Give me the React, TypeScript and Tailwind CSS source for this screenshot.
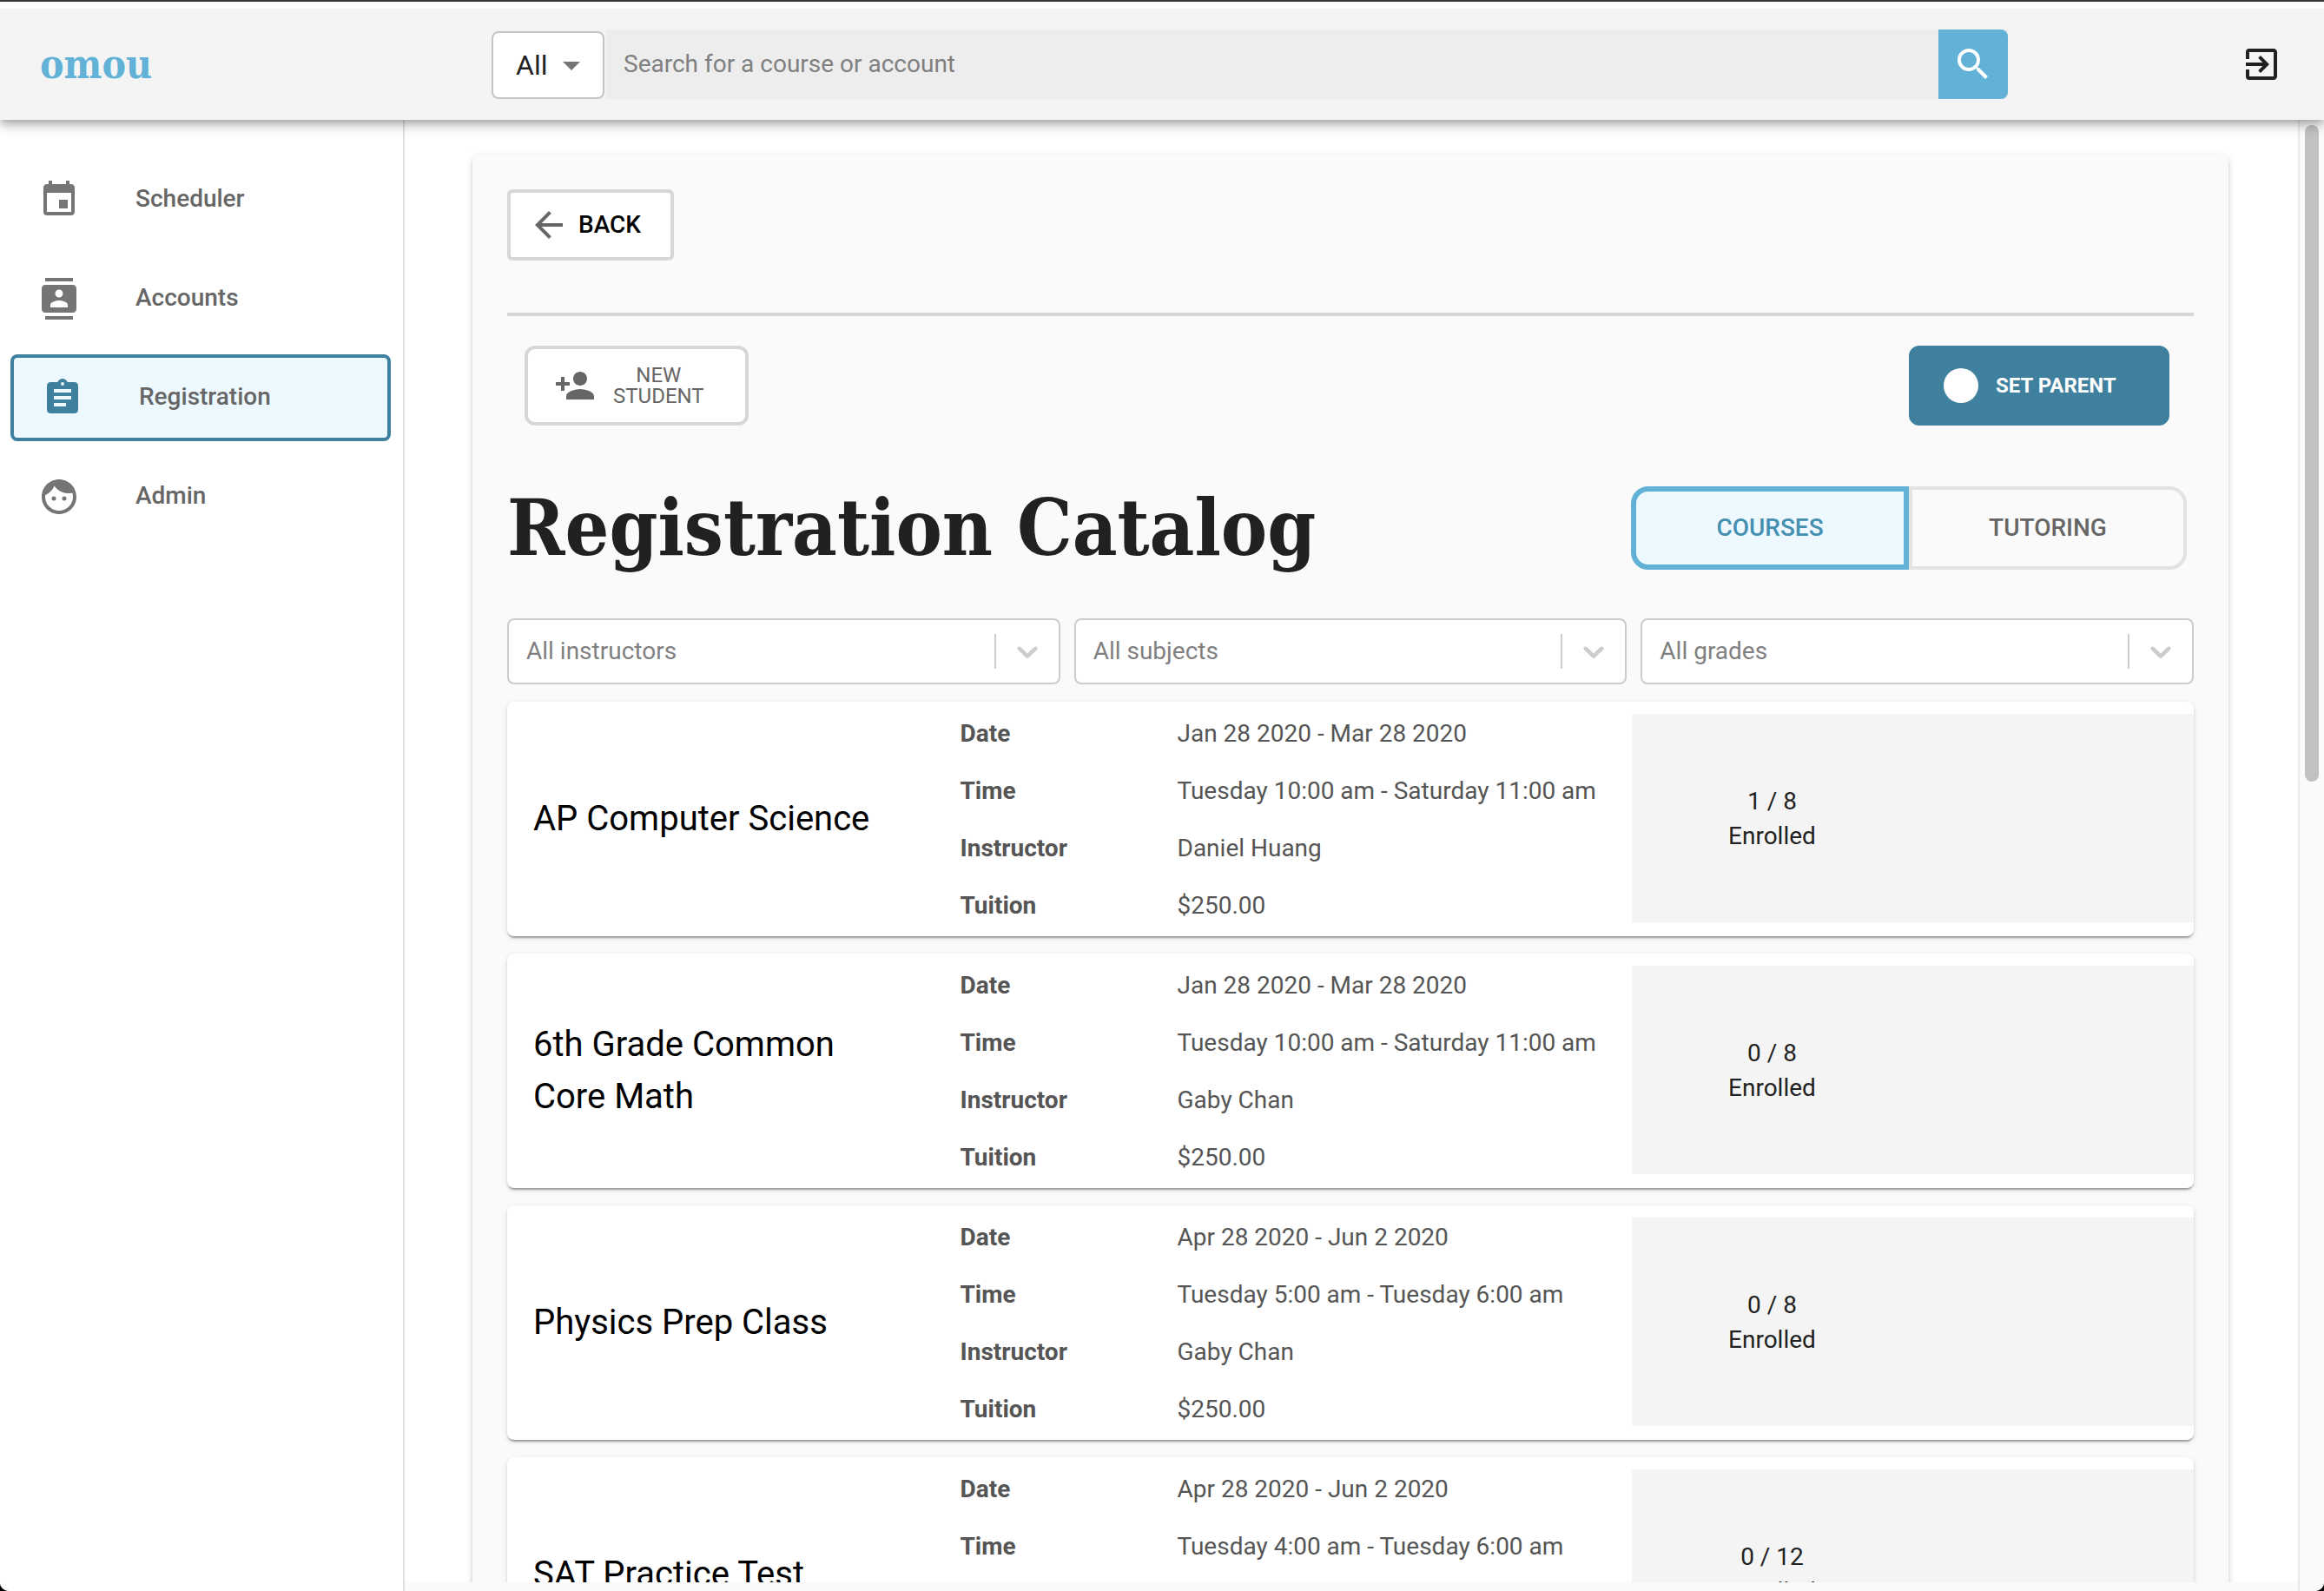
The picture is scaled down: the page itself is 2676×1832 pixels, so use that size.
import type { ReactNode } from "react";
import type { IconType } from "react-icons";
import {
  MdArrowBack,
  MdArrowDropDown,
  MdAssignment,
  MdContacts,
  MdEvent,
  MdExitToApp,
  MdFace,
  MdPersonAdd,
  MdSearch,
} from "react-icons/md";

type NavEntry = { label: string; icon: IconType; active?: boolean };

const navEntries: NavEntry[] = [
  { label: "Scheduler", icon: MdEvent },
  { label: "Accounts", icon: MdContacts },
  { label: "Registration", icon: MdAssignment, active: true },
  { label: "Admin", icon: MdFace },
];

type Course = {
  title: string;
  date: string;
  time: string;
  instructor: string;
  tuition: string;
  enrolled: string;
};

const courses: Course[] = [
  {
    title: "AP Computer Science",
    date: "Jan 28 2020 - Mar 28 2020",
    time: "Tuesday 10:00 am - Saturday 11:00 am",
    instructor: "Daniel Huang",
    tuition: "$250.00",
    enrolled: "1 / 8",
  },
  {
    title: "6th Grade Common Core Math",
    date: "Jan 28 2020 - Mar 28 2020",
    time: "Tuesday 10:00 am - Saturday 11:00 am",
    instructor: "Gaby Chan",
    tuition: "$250.00",
    enrolled: "0 / 8",
  },
  {
    title: "Physics Prep Class",
    date: "Apr 28 2020 - Jun 2 2020",
    time: "Tuesday 5:00 am - Tuesday 6:00 am",
    instructor: "Gaby Chan",
    tuition: "$250.00",
    enrolled: "0 / 8",
  },
  {
    title: "SAT Practice Test",
    date: "Apr 28 2020 - Jun 2 2020",
    time: "Tuesday 4:00 am - Tuesday 6:00 am",
    instructor: "Daniel Huang",
    tuition: "$250.00",
    enrolled: "0 / 12",
  },
];

function Header() {
  return (
    <header className="relative z-10 flex h-[138px] shrink-0 flex-col bg-[#f4f4f4] shadow-[0_4px_8px_-2px_rgba(0,0,0,0.2),0_8px_10px_0_rgba(0,0,0,0.14),0_2px_20px_0_rgba(0,0,0,0.12)]">
      <div className="h-[2px] bg-[#38383a]" />
      <div className="h-2 bg-[#fcfcfc]" />
      <div className="flex flex-1 items-center pr-12 pl-[46px]">
        <a
          href="#home"
          className="w-[520px] font-['Roboto_Slab','DejaVu_Serif_Condensed','DejaVu_Serif',serif] text-[46px] font-bold text-[#62b1d6]"
        >
          omou
        </a>
        <form className="flex h-20 flex-1 items-stretch bg-[#ededed]" role="search">
          <div className="flex bg-[#f4f4f4] pt-[2px] pr-[2px]">
            <label className="flex w-[130px] items-center rounded-lg border-2 border-[#c4c4c4] bg-white pl-[26px]">
              <select
                aria-label="Search scope"
                className="w-10 appearance-none bg-transparent text-[32px] text-[#212121]"
              >
                <option>All</option>
              </select>
              <MdArrowDropDown aria-hidden className="size-12 shrink-0 text-[#757575]" />
            </label>
          </div>
          <input
            type="text"
            aria-label="Search"
            placeholder="Search for a course or account"
            className="min-w-0 flex-1 bg-transparent px-5 text-[28px] text-[#212121] placeholder:text-[#808080]"
          />
          <button
            type="button"
            aria-label="Search"
            className="flex w-20 items-center justify-center rounded-r-lg bg-[#62b1d6] text-white"
          >
            <MdSearch className="size-12" />
          </button>
        </form>
        <div className="flex w-[316px] justify-end">
          <button type="button" aria-label="Log out" className="text-[#212121]">
            <MdExitToApp className="size-12" />
          </button>
        </div>
      </div>
    </header>
  );
}

function Sidebar() {
  return (
    <nav className="flex w-[466px] shrink-0 flex-col gap-[14px] border-r-2 border-[#e0e0e0] bg-white pt-[42px] pr-[14px] pl-3">
      {navEntries.map(({ label, icon: Icon, active }) => (
        <a
          key={label}
          href={`#${label.toLowerCase()}`}
          className={
            active
              ? "flex h-[100px] items-center gap-16 rounded-lg border-4 border-[#3e809d] bg-[#edf9ff] px-8"
              : "flex h-[100px] items-center gap-16 px-8"
          }
        >
          <Icon aria-hidden className={active ? "size-12 text-[#3e809d]" : "size-12 text-[#757575]"} />
          <span className="pb-[2px] text-[28px] font-medium text-[#666666]">{label}</span>
        </a>
      ))}
    </nav>
  );
}

function FilterSelect({ label }: { label: string }) {
  return (
    <label className="flex h-[76px] items-center rounded-lg border-2 border-[#cccccc] bg-white">
      <select
        aria-label={label}
        className="min-w-0 flex-1 appearance-none bg-transparent px-5 text-[28px] text-[#808080]"
      >
        <option>{label}</option>
      </select>
      <span className="h-10 w-[2px] bg-[#cccccc]" />
      <span className="px-4">
        <svg aria-hidden viewBox="0 0 20 20" className="size-10 fill-[#cccccc]">
          <path d="M4.516 7.548c0.436-0.446 1.043-0.481 1.576 0l3.908 3.747 3.908-3.747c0.533-0.481 1.141-0.446 1.574 0 0.436 0.445 0.408 1.197 0 1.615-0.406 0.418-4.695 4.502-4.695 4.502-0.217 0.223-0.502 0.335-0.787 0.335s-0.57-0.112-0.789-0.335c0 0-4.287-4.084-4.695-4.502s-0.436-1.17 0-1.615z" />
        </svg>
      </span>
    </label>
  );
}

function Detail({ name, children }: { name: string; children: ReactNode }) {
  return (
    <div className="flex h-[66px] items-center">
      <dt className="w-[250px] shrink-0 font-bold">{name}</dt>
      <dd className="whitespace-nowrap">{children}</dd>
    </div>
  );
}

function CourseCard({ course }: { course: Course }) {
  return (
    <article className="grid shrink-0 grid-cols-12 rounded-lg bg-white shadow-[0_4px_2px_-2px_rgba(0,0,0,0.2),0_2px_2px_0_rgba(0,0,0,0.14),0_2px_6px_0_rgba(0,0,0,0.12)]">
      <h2 className="col-span-3 flex items-center pr-10 pl-[30px] text-[40px] leading-[60px] text-black">
        {course.title}
      </h2>
      <dl className="col-span-5 pt-1 pb-[2px] pl-9 text-[28px] text-[#555555]">
        <Detail name="Date">{course.date}</Detail>
        <Detail name="Time">{course.time}</Detail>
        <Detail name="Instructor">{course.instructor}</Detail>
        <Detail name="Tuition">{course.tuition}</Detail>
      </dl>
      <div className="col-span-4 mt-[14px] mb-4 grid grid-cols-2 items-center bg-[#f4f4f4]">
        <p className="pt-[2px] text-center text-[28px] leading-10 text-[#212121]">
          {course.enrolled}
          <br />
          Enrolled
        </p>
      </div>
    </article>
  );
}

function Catalog() {
  return (
    <section className="mr-20 ml-[78px] flex flex-col rounded-lg bg-[#fafafa] p-10 shadow-[0_6px_2px_-4px_rgba(0,0,0,0.2),0_4px_4px_0_rgba(0,0,0,0.14),0_2px_10px_0_rgba(0,0,0,0.12)]">
      <div className="border-b-4 border-[#dad6d6] pb-[60px]">
        <button
          type="button"
          className="flex h-[82px] w-48 items-center gap-2.5 rounded-md border-4 border-[#dad6d6] bg-white pl-5 text-[28px] font-medium text-black"
        >
          <MdArrowBack aria-hidden className="size-12 text-[#666666]" />
          BACK
        </button>
      </div>

      <div className="mt-[34px] mr-7 ml-5 flex items-center justify-between">
        <button
          type="button"
          className="flex h-[92px] w-[258px] items-center gap-5 rounded-xl border-4 border-[#dad6d6] bg-white pl-[30px] text-2xl leading-6 text-[#666666]"
        >
          <MdPersonAdd aria-hidden className="size-12" />
          <span>
            NEW
            <br />
            STUDENT
          </span>
        </button>
        <button
          type="button"
          className="flex h-[92px] w-[300px] items-center gap-5 rounded-xl bg-[#3e809d] pl-10 text-2xl font-bold text-white"
        >
          <span className="size-10 rounded-full bg-white" />
          SET PARENT
        </button>
      </div>

      <div className="mt-[60px] mr-2 flex items-center justify-between">
        <h1 className="font-['Roboto_Slab','DejaVu_Serif_Condensed','DejaVu_Serif',serif] text-[89px] leading-[116px] font-bold whitespace-nowrap text-[#212121]">
          Registration Catalog
        </h1>
        <div className="flex text-[28px] font-medium">
          <button
            type="button"
            aria-pressed="true"
            className="h-24 w-80 rounded-l-[20px] border-6 border-[#62b1d6] bg-[#edf9ff] text-[#4590b0]"
          >
            COURSES
          </button>
          <button
            type="button"
            aria-pressed="false"
            className="h-24 w-80 rounded-r-[20px] border-4 border-[#e2e2e2] text-[#666666]"
          >
            TUTORING
          </button>
        </div>
      </div>

      <div className="mt-[46px] grid grid-cols-3 gap-4">
        <FilterSelect label="All instructors" />
        <FilterSelect label="All subjects" />
        <FilterSelect label="All grades" />
      </div>

      <div className="mt-5 flex flex-col gap-5">
        {courses.map((course) => (
          <CourseCard key={course.title} course={course} />
        ))}
      </div>
    </section>
  );
}

export default function App() {
  return (
    <div className="h-screen bg-black font-['Roboto',sans-serif]">
      <div className="flex h-full flex-col overflow-hidden rounded-b-[10px] bg-[#fafafa]">
        <Header />
        <div className="flex min-h-0 flex-1">
          <Sidebar />
          <div className="flex min-w-0 flex-1 pb-2.5">
            <main className="min-w-0 flex-1 overflow-hidden bg-white pt-10">
              <Catalog />
            </main>
          </div>
          <div className="w-[30px] shrink-0 border-l-2 border-[#e8e8e8] bg-[#fafafa] px-1.5 pt-1.5">
            <div className="h-[756px] w-4 rounded-full bg-[#c1c1c1]" />
          </div>
        </div>
      </div>
    </div>
  );
}
